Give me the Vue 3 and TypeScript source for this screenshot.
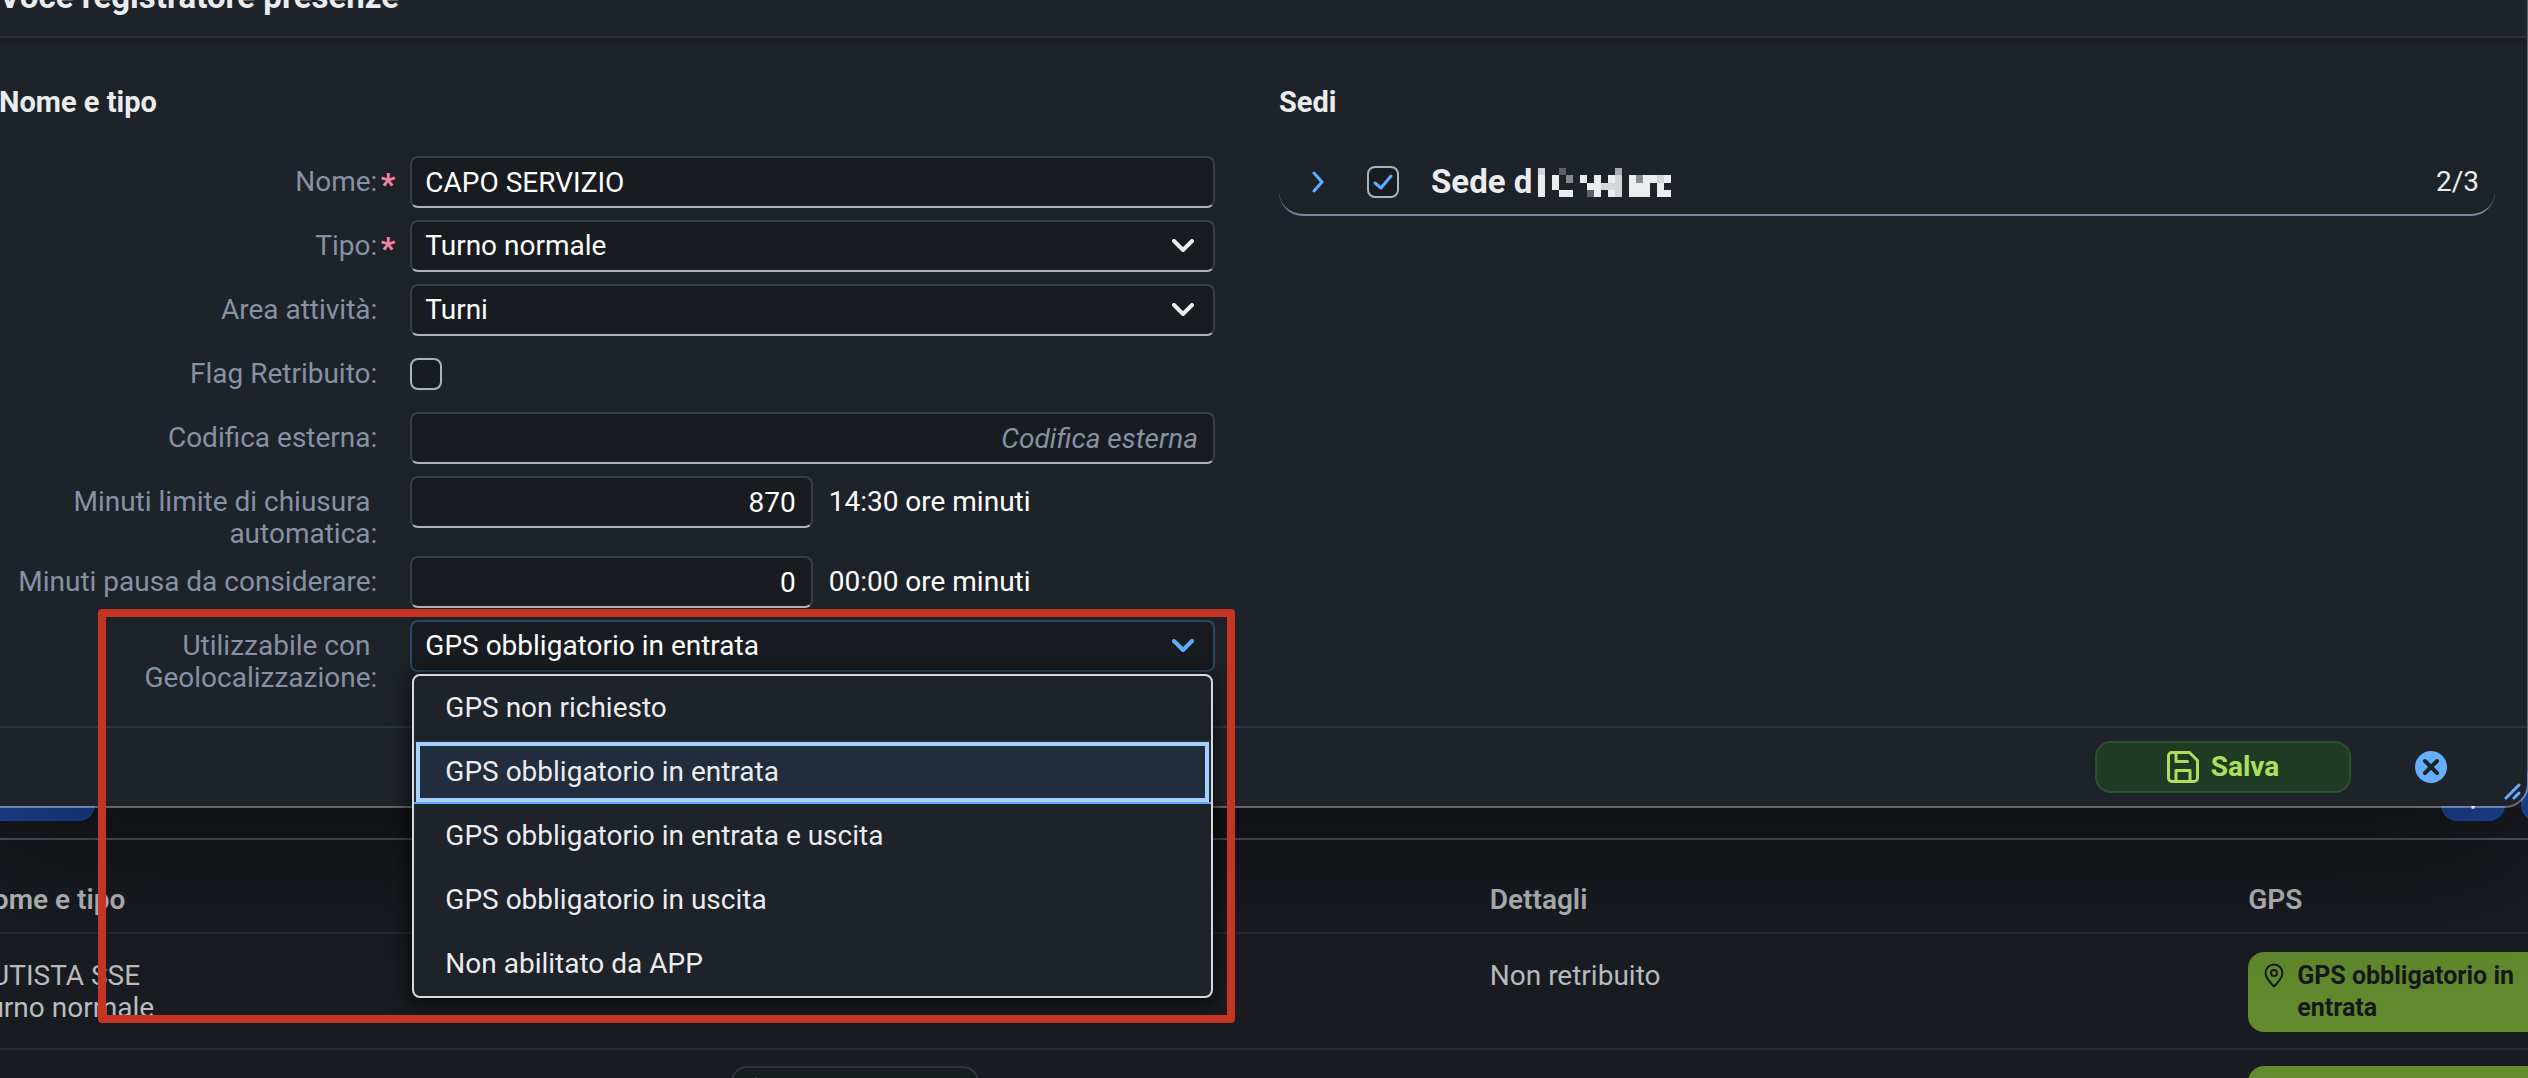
<script setup lang="ts">
import { ref } from 'vue'

const nome = ref('CAPO SERVIZIO')
const tipo = ref('Turno normale')
const area = ref('Turni')
const retribuito = ref(false)
const codifica = ref('')
const minutiLimite = ref('870')
const minutiPausa = ref('0')
const gps = ref('GPS obbligatorio in entrata')
const sedeAttiva = ref(true)

const gpsOptions: string[] = [
  'GPS non richiesto',
  'GPS obbligatorio in entrata',
  'GPS obbligatorio in entrata e uscita',
  'GPS obbligatorio in uscita',
  'Non abilitato da APP',
]

interface Cell { x: number; y: number; c: string }

// Shades of the obscured site name, one character per mosaic cell
const shades: Record<string, string> = { w: '#ebecee', l: '#d3d6d9', m: '#a8abaf', g: '#86898d', d: '#5d6065' }
const mosaic: string[] = [
  'l..d.......m.......',
  'w.w.g.w.w.wl.wgwwlw',
  'w.w....wwlll.www.w.',
  'w..ww..dw.wl.www.ww',
]
const cells: Cell[] = mosaic.flatMap((row, y) =>
  [...row].flatMap((ch, x) => (ch === '.' ? [] : [{ x: x * 7, y: y * 7, c: shades[ch] }])),
)
</script>

<template>
  <div class="page">
    <section class="dialog" role="dialog" aria-labelledby="dialog-title">
      <header class="dialog-head">
        <h1 id="dialog-title">Voce registratore presenze</h1>
      </header>

      <div class="dialog-body">
        <form id="voce" class="panel" @submit.prevent>
          <h2>Nome e tipo</h2>
          <div class="rows">
            <div class="row">
              <label class="required" for="nome">Nome:</label>
              <div class="field"><input id="nome" v-model="nome" class="box" type="text" /></div>
            </div>
            <div class="row">
              <label class="required" for="tipo">Tipo:</label>
              <div class="field">
                <div class="select">
                  <select id="tipo" v-model="tipo" class="box"><option>Turno normale</option></select>
                  <svg class="arrow" viewBox="0 0 22 14"><path d="M2 2l9 9 9-9" /></svg>
                </div>
              </div>
            </div>
            <div class="row">
              <label for="area">Area attività:</label>
              <div class="field">
                <div class="select">
                  <select id="area" v-model="area" class="box"><option>Turni</option></select>
                  <svg class="arrow" viewBox="0 0 22 14"><path d="M2 2l9 9 9-9" /></svg>
                </div>
              </div>
            </div>
            <div class="row">
              <label for="flag">Flag Retribuito:</label>
              <div class="field tick"><input id="flag" v-model="retribuito" class="check" type="checkbox" /></div>
            </div>
            <div class="row">
              <label for="codifica">Codifica esterna:</label>
              <div class="field">
                <input id="codifica" v-model="codifica" class="box right" type="text" placeholder="Codifica esterna" />
              </div>
            </div>
            <div class="row">
              <label for="limite">Minuti limite di chiusura&nbsp;<br />automatica:</label>
              <div class="field half">
                <input id="limite" v-model="minutiLimite" class="box right" type="text" />
                <span>14:30 ore minuti</span>
              </div>
            </div>
            <div class="row">
              <label for="pausa">Minuti pausa da considerare:</label>
              <div class="field half">
                <input id="pausa" v-model="minutiPausa" class="box right" type="text" />
                <span>00:00 ore minuti</span>
              </div>
            </div>
            <div class="row">
              <label for="gps">Utilizzabile con&nbsp;<br />Geolocalizzazione:</label>
              <div class="field">
                <div class="select open">
                  <select id="gps" v-model="gps" class="box">
                    <option v-for="o in gpsOptions" :key="o">{{ o }}</option>
                  </select>
                  <svg class="arrow" viewBox="0 0 22 14"><path d="M2 2l9 9 9-9" /></svg>
                  <ul class="menu" role="listbox">
                    <li
                      v-for="o in gpsOptions"
                      :key="o"
                      role="option"
                      :aria-selected="o === gps"
                      :class="{ selected: o === gps }"
                      @click="gps = o"
                    >{{ o }}</li>
                  </ul>
                </div>
              </div>
              <div class="highlight"></div>
            </div>
          </div>
        </form>

        <section class="panel">
          <h2>Sedi</h2>
          <div class="site">
            <button class="expand" type="button" aria-label="Espandi">
              <svg viewBox="0 0 14 22"><path d="M3 2l8 9-8 9" /></svg>
            </button>
            <span class="tickbox">
              <input v-model="sedeAttiva" class="check" type="checkbox" aria-labelledby="sede" />
              <svg v-if="sedeAttiva" viewBox="0 0 32 32"><path d="M8 17l6 5 10-12" /></svg>
            </span>
            <strong id="sede">Sede d</strong>
            <svg class="mosaic" viewBox="0 0 133 28" preserveAspectRatio="none" shape-rendering="crispEdges" aria-hidden="true">
              <rect v-for="(p, i) in cells" :key="i" :x="p.x" :y="p.y" width="7" height="7" :fill="p.c" />
            </svg>
            <span class="count">2/3</span>
          </div>
        </section>
      </div>

      <footer class="dialog-foot">
        <button class="save" type="submit" form="voce">
          <svg viewBox="0 0 32 32">
            <path d="M5 1.500h17.500l8 8V27a3.500 3.500 0 0 1-3.500 3.500H5A3.500 3.500 0 0 1 1.500 27V5A3.500 3.500 0 0 1 5 1.500z" />
            <path d="M9 2v8.500h11.500M9 30V19.500h14V30" />
          </svg>
          Salva
        </button>
        <button class="close" type="button" aria-label="Chiudi">
          <svg viewBox="0 0 32 32"><circle cx="16" cy="16" r="16" /><path d="M10 10l12 12M22 10L10 22" /></svg>
        </button>
        <svg class="grip" viewBox="0 0 18 18"><path d="M2 15L15 2M10 15l5-5" /></svg>
      </footer>
    </section>

    <main>
      <div class="toolbar">
        <button class="tool wide" type="button" aria-label="Filtri"></button>
        <div class="tools">
          <button class="tool" type="button" aria-label="Aggiungi">
            <svg viewBox="0 0 28 28"><path d="M14 1v26M1 14h26" /></svg>
          </button>
          <button class="tool" type="button" aria-label="Altro"></button>
        </div>
      </div>
      <table>
        <thead>
          <tr><th>Nome e tipo</th><th></th><th>Dettagli</th><th>GPS</th></tr>
        </thead>
        <tbody>
          <tr>
            <td><p>AUTISTA SSE<br />Turno normale</p></td>
            <td></td>
            <td><p>Non retribuito</p></td>
            <td>
              <div class="badge">
                <svg viewBox="0 0 20 25"><path d="M10 23.500C5 18.500 1.500 14.500 1.500 10a8.500 8.500 0 0 1 17 0c0 4.500-3.500 8.500-8.500 13.500z" /><circle cx="10" cy="10" r="3" /></svg>
                <span>GPS obbligatorio in<br />entrata</span>
              </div>
            </td>
          </tr>
          <tr>
            <td></td>
            <td>
              <button class="edit" type="button" aria-label="Modifica">
                <svg viewBox="0 0 32 32"><path d="M13 3L4 14l9 11" /></svg>
              </button>
            </td>
            <td></td>
            <td><div class="badge"></div></td>
          </tr>
        </tbody>
      </table>
    </main>
  </div>
</template>

<style>
body {
  margin: 0;
  background: #191c21;
}
</style>

<style scoped>
.page {
  position: relative;
  height: 100vh;
  overflow: hidden;
  background: #191c21;
  color: #fff;
  font: 28px/32px Roboto, "Liberation Sans", sans-serif;
}
.page *,
.page *::after {
  box-sizing: border-box;
}
button,
input,
select {
  font: inherit;
  margin: 0;
}
svg {
  display: block;
  fill: none;
  stroke: currentColor;
  stroke-width: 3;
  stroke-linecap: round;
  stroke-linejoin: round;
}

/* dialog */
.dialog {
  position: relative;
  z-index: 2;
  margin: -44px -1px 0 -35px;
  border: 2px solid rgba(255, 255, 255, 0.35);
  border-radius: 24px;
  background: #1e2229;
  background-clip: padding-box;
  box-shadow: 0 40px 160px rgba(0, 0, 0, 0.5);
}
.dialog-head {
  display: flex;
  align-items: center;
  height: 80px;
  padding: 0 32px;
  border-bottom: 2px solid #2f353f;
  box-shadow: 0 4px 6px rgba(0, 0, 0, 0.2);
}
h1,
h2 {
  margin: 0;
  color: #ebecee;
  font-weight: 700;
}
h1 {
  font-size: 33px;
}
h2 {
  font-size: 29px;
}
.dialog-body {
  display: grid;
  grid-template-columns: 1fr 1fr;
  gap: 64px;
  padding: 48px 32px 26px;
}
.panel {
  min-width: 0;
}
.rows {
  margin-top: 38px;
}
.row {
  position: relative;
  display: grid;
  grid-template-columns: 1fr 2fr;
  align-items: start;
}
.row label {
  position: relative;
  padding: 10px 27px 6px 0;
  color: #8592a6;
  text-align: right;
}
.required::after {
  content: "*";
  position: absolute;
  top: 12px;
  right: 9px;
  color: #f283a4;
  font-size: 32px;
  font-weight: 700;
}
.field {
  padding: 0 0 12px 6px;
}
.box {
  display: block;
  width: 100%;
  height: 52px;
  padding: 0 13px;
  border: 2px solid #393e43;
  border-bottom-color: #a9b4be;
  border-radius: 8px;
  outline: none;
  background: #181c20;
  color: #fff;
  appearance: none;
}
.right {
  padding-right: 15px;
  text-align: right;
}
.box::placeholder {
  color: #8592a6;
  font-style: italic;
  opacity: 1;
}
.half {
  display: grid;
  grid-template-columns: 1fr 1fr;
  align-items: center;
}
.half span {
  padding-left: 16px;
}
.tick {
  padding: 10px 0 22px 6px;
}
.check {
  display: block;
  width: 32px;
  height: 32px;
  border: 2px solid #a9b4be;
  border-radius: 8px;
  background: #181c20;
  appearance: none;
}
.select {
  position: relative;
}
.arrow {
  position: absolute;
  top: 19px;
  right: 21px;
  width: 22px;
  height: 14px;
  color: #ebecee;
  stroke-width: 4;
  pointer-events: none;
}
.open .box {
  border-color: #2c4766;
}
.open .arrow {
  color: #5fadff;
}
.menu {
  position: absolute;
  z-index: 3;
  top: calc(100% + 2px);
  left: 2px;
  right: 2px;
  margin: 0;
  padding: 0;
  border: 2px solid #d6d8da;
  border-radius: 8px;
  background: #1e2229;
  box-shadow: 0 4px 20px 2px #000000b0;
  color: #ebecee;
  list-style: none;
}
.menu li {
  padding: 16px 31px;
}
.menu .selected {
  padding-bottom: 14px;
  border-bottom: 2px solid #5fadff;
  background: #212d3c;
  outline: 4px solid #a6d1ff;
  outline-offset: -6px;
}
.highlight {
  position: absolute;
  z-index: 4;
  top: -11px;
  left: 99px;
  right: -20px;
  height: 414px;
  border: 8px solid #c63524;
  border-radius: 4px;
  pointer-events: none;
}

/* sites */
.site {
  display: flex;
  align-items: center;
  height: 68px;
  margin-top: 30px;
  padding: 2px 16px 0 32px;
  border-bottom: 2px solid #7787a0;
  border-radius: 0 0 24px 24px;
}
.expand {
  padding: 0;
  border: 0;
  background: none;
  color: #5fadff;
}
.expand svg {
  width: 14px;
  height: 22px;
}
.tickbox {
  position: relative;
  margin: 0 32px 0 42px;
}
.tickbox svg {
  position: absolute;
  inset: 0;
  color: #5fadff;
  pointer-events: none;
}
.site strong {
  width: 107px;
  color: #ebecee;
  font-size: 33px;
  white-space: nowrap;
}
.mosaic {
  width: 133px;
  height: 29px;
  stroke: none;
}
.count {
  margin-left: auto;
  color: #ebecee;
}

/* dialog footer */
.dialog-foot {
  position: relative;
  display: flex;
  justify-content: flex-end;
  align-items: center;
  gap: 64px;
  padding: 13px 80px;
  border-top: 2px solid #2f353f;
}
.save {
  display: flex;
  justify-content: center;
  align-items: center;
  gap: 12px;
  width: 256px;
  height: 52px;
  border: 2px solid #2b5230;
  border-radius: 16px;
  background: #213a23;
  color: #abe05c;
  font-weight: 700;
}
.save svg {
  width: 32px;
  height: 32px;
}
.close {
  padding: 0;
  border: 0;
  background: none;
}
.close svg {
  width: 32px;
  height: 32px;
}
.close circle {
  fill: #64afff;
  stroke: none;
}
.close path {
  stroke: #1e2229;
  stroke-width: 4;
}
.grip {
  position: absolute;
  right: 5px;
  bottom: 5px;
  width: 18px;
  height: 18px;
  color: #64afff;
}

/* page behind the dialog */
.toolbar {
  display: flex;
  justify-content: space-between;
  margin-top: -39px;
  padding-bottom: 17px;
  border-bottom: 2px solid #505a69;
}
.tools {
  display: flex;
  gap: 16px;
  margin-right: -57px;
}
.tool {
  display: grid;
  place-items: center;
  width: 64px;
  height: 52px;
  padding: 0;
  border: 2px solid #1f4fae;
  border-radius: 16px;
  background: #1f4aa3;
  color: #fff;
}
.tool svg {
  width: 28px;
  height: 28px;
}
.wide {
  width: 120px;
  margin-left: -25px;
}
table {
  width: 120%;
  margin-left: -27px;
  border-spacing: 0;
  table-layout: fixed;
  color: #bcbec0;
}
th {
  padding: 44px 0 16px;
  border-bottom: 2px solid #252a31;
  font-weight: 600;
  text-align: left;
}
td {
  padding: 18px 0 16px;
  border-bottom: 2px solid #252b32;
  vertical-align: top;
}
tr + tr td {
  padding-top: 16px;
}
td p {
  margin: 0;
  padding: 8px 0;
}
.badge {
  display: flex;
  align-items: flex-start;
  gap: 13px;
  min-height: 80px;
  padding: 8px 16px;
  border-radius: 16px;
  background: #648b2e;
  color: #16191c;
  font-size: 25px;
  font-weight: 700;
}
.badge svg {
  width: 20px;
  height: 25px;
  margin-top: 3px;
  stroke-width: 2;
}
.edit {
  display: flex;
  align-items: center;
  width: 248px;
  height: 52px;
  padding: 0 10px;
  border: 2px solid #2c3642;
  border-radius: 16px;
  background: #181d20;
  color: #5b94d6;
}
.edit svg {
  width: 32px;
  height: 32px;
}
</style>
